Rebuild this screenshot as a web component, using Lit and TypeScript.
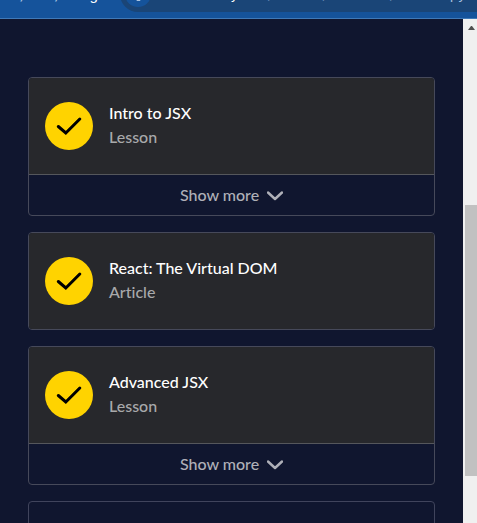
import { LitElement, html, css, nothing } from "lit";
import { customElement, property, state } from "lit/decorators.js";

interface Item {
  title: string;
  kind: string;
  expandable: boolean;
}

const items: Item[] = [
  { title: "Intro to JSX", kind: "Lesson", expandable: true },
  { title: "React: The Virtual DOM", kind: "Article", expandable: false },
  { title: "Advanced JSX", kind: "Lesson", expandable: true },
];

@customElement("browser-bar")
export class BrowserBar extends LitElement {
  static styles = css`
    :host {
      display: flex;
      align-items: flex-end;
      box-sizing: border-box;
      height: 19px;
      overflow: hidden;
      background: #15539b;
      border-bottom: 1px solid #3f79b8;
      font: 15px/20px Roboto, "Noto Sans", sans-serif;
      color: #a9c4e2;
    }
    .tabs {
      flex: none;
      box-sizing: border-box;
      width: 120px;
      padding: 0 22px 13px 20px;
      display: flex;
      justify-content: space-between;
    }
    .active {
      color: #fff;
    }
    .address {
      flex: 1;
      min-width: 0;
      display: flex;
      align-items: center;
      height: 36px;
      margin-bottom: 6px;
      padding-left: 5px;
      background: #1a4577;
      border-radius: 18px 0 0 18px;
    }
    .badge {
      flex: none;
      display: flex;
      align-items: center;
      justify-content: center;
      width: 26px;
      height: 26px;
      border-radius: 50%;
      background: #15539b;
    }
    .pin {
      width: 14px;
      height: 14px;
    }
    .url {
      margin-left: 4px;
      padding-top: 2px;
      white-space: nowrap;
      font-family: "DejaVu Sans", sans-serif;
      font-size: 13px;
    }
    .host {
      color: #fff;
    }
  `;

  render() {
    return html`
      <div class="tabs"><span>;</span><span>;</span><span class="active">g</span></div>
      <div class="address">
        <span class="badge">
          <svg class="pin" viewBox="0 0 14 14" aria-hidden="true">
            <path d="M2 1 H12 V8 L9 14 H6 L2 8 Z" fill="#a9c4e2" />
          </svg>
        </span>
        <span class="url"><span class="host">codecademy</span>.com/courses/react-101/modulespy</span>
      </div>
    `;
  }
}

@customElement("syllabus-card")
export class SyllabusCard extends LitElement {
  @property({ attribute: false }) item?: Item;
  @state() private open = false;

  static styles = css`
    :host {
      display: block;
      overflow: hidden;
      border: 1px solid #46495a;
      border-radius: 4px;
    }
    .head {
      display: flex;
      align-items: center;
      gap: 16px;
      padding: 23px 16px;
      background: #27282c;
      color: #fff;
      text-decoration: none;
    }
    .check {
      flex: none;
      width: 48px;
      height: 48px;
    }
    .label {
      padding-bottom: 2px;
      font-size: 16px;
      font-weight: 500;
      line-height: 24px;
      font-variant-ligatures: none;
    }
    .title,
    .kind {
      display: block;
    }
    .kind {
      color: #a8a9ab;
    }
    .more {
      display: flex;
      align-items: center;
      justify-content: center;
      gap: 8px;
      width: 100%;
      height: 41px;
      padding: 0 0 2px;
      border: 0;
      border-top: 1px solid #55575c;
      background: none;
      color: #afb0b8;
      font: inherit;
      font-size: 16px;
      font-weight: 500;
      cursor: pointer;
    }
    .chevron {
      width: 16px;
      height: 16px;
    }
  `;

  render() {
    if (!this.item) return nothing;
    return html`
      <a class="head" href="#">
        <svg class="check" viewBox="0 0 48 48" aria-hidden="true">
          <circle cx="24" cy="24" r="24" fill="#ffd300" />
          <path d="M13.3 24.5 L20.8 31 L34.8 17" fill="none" stroke="#000" stroke-width="3" stroke-linecap="round" />
        </svg>
        <span class="label">
          <span class="title">${this.item.title}</span>
          <span class="kind">${this.item.kind}</span>
        </span>
      </a>
      ${this.item.expandable
        ? html`<button
            class="more"
            aria-expanded=${this.open ? "true" : "false"}
            @click=${() => (this.open = !this.open)}
          >
            <span>Show more</span>
            <svg class="chevron" viewBox="0 0 16 16" aria-hidden="true">
              <path d="M1 6.5 L8 13 L15 6.5" fill="none" stroke="currentColor" stroke-width="2.4" stroke-linecap="round" stroke-linejoin="round" />
            </svg>
          </button>`
        : nothing}
    `;
  }
}

@customElement("app-root")
export class AppRoot extends LitElement {
  static styles = css`
    :host {
      display: flex;
      flex-direction: column;
      height: 100vh;
      overflow: hidden;
      background: #10162f;
      font-family: Lato, "Liberation Sans", sans-serif;
    }
    browser-bar {
      flex: none;
    }
    .view {
      flex: 1;
      min-height: 0;
      display: flex;
    }
    .list {
      flex: 1;
      min-width: 0;
      overflow: hidden;
      display: flex;
      flex-direction: column;
      gap: 16px;
      padding: 58px 28px 0;
    }
    .list > * {
      flex: none;
    }
    .next {
      height: 96px;
      border: 1px solid #40445c;
      border-radius: 4px;
    }
    .track {
      flex: none;
      box-sizing: border-box;
      width: 14px;
      padding: 7px 0 0 2px;
      background: #f0f0f0;
    }
    .arrow {
      display: block;
      width: 12px;
      height: 4px;
      margin: 0 0 0 3px;
    }
    .thumb {
      height: 54.5%;
      margin-top: 175px;
      background: #c1c1c1;
    }
  `;

  render() {
    return html`
      <browser-bar></browser-bar>
      <div class="view">
        <main class="list">
          ${items.map((item) => html`<syllabus-card .item=${item}></syllabus-card>`)}
          <div class="next"></div>
        </main>
        <div class="track">
          <svg class="arrow" viewBox="0 0 12 4" aria-hidden="true">
            <path d="M0 4 L3 0 H4 L7 4 Z" fill="#505050" />
          </svg>
          <div class="thumb"></div>
        </div>
      </div>
    `;
  }
}
